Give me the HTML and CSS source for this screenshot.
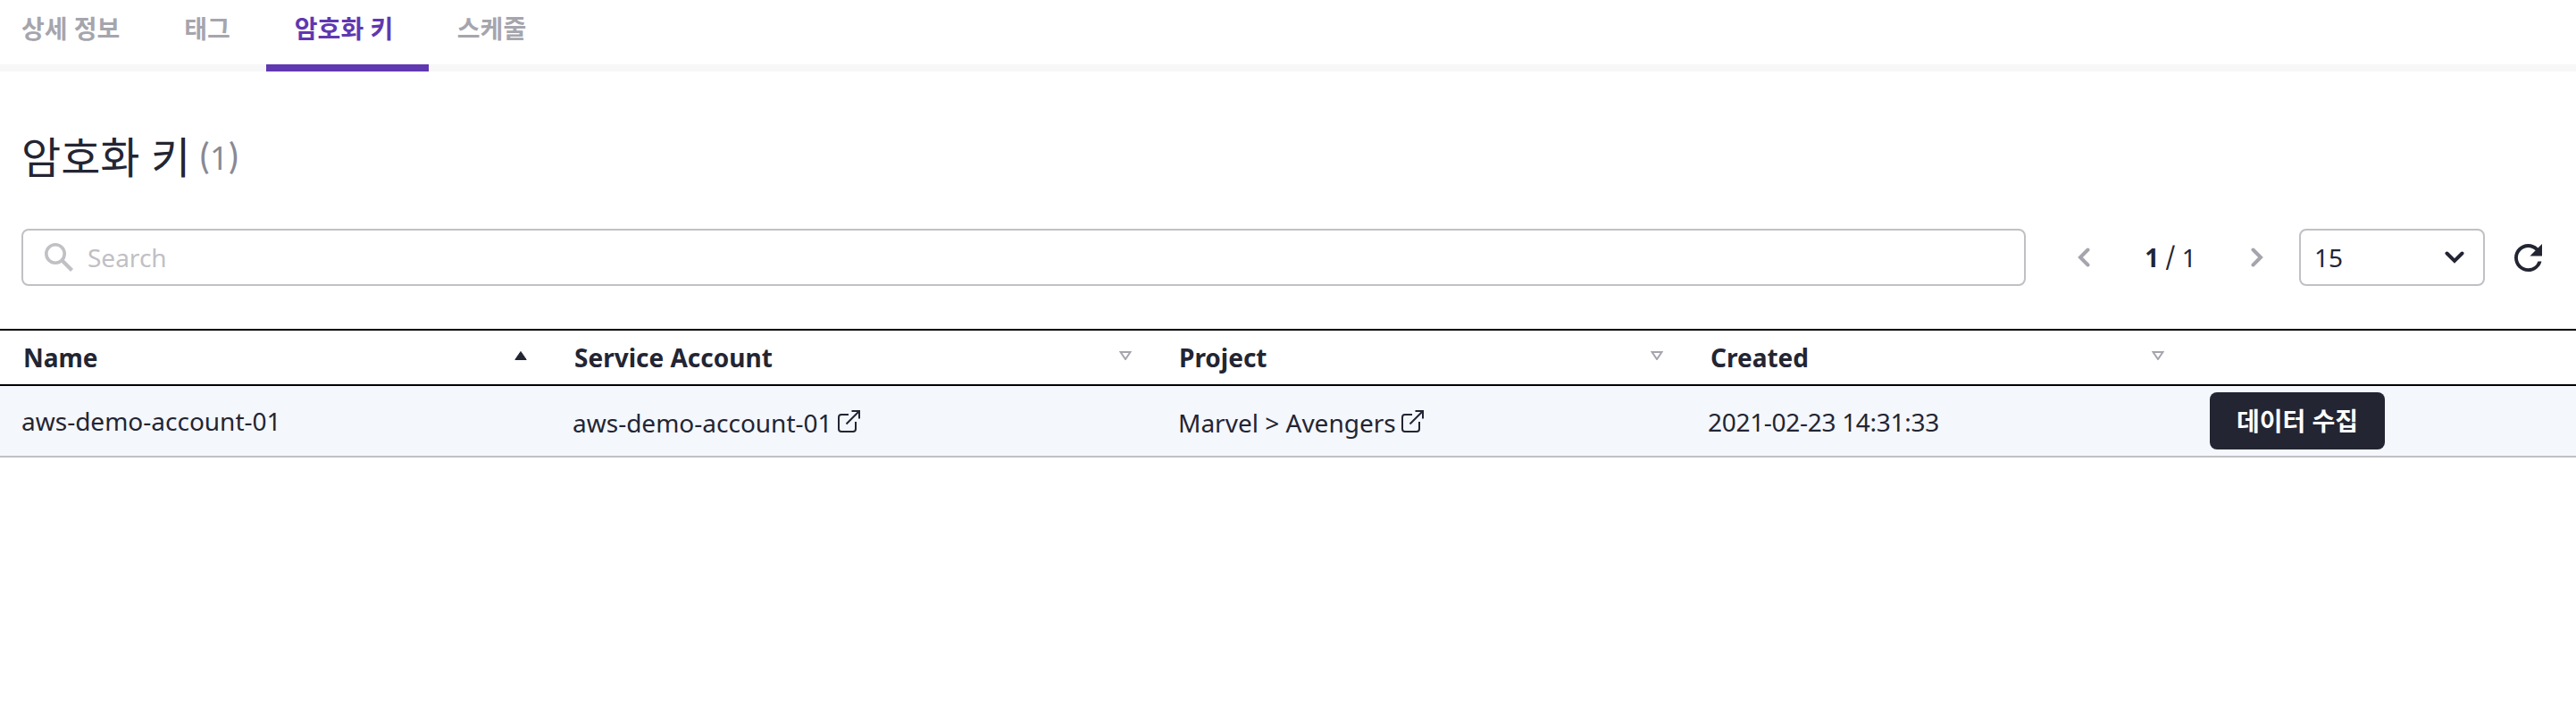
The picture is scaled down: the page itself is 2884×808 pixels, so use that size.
FILE: index.html
```html
<!DOCTYPE html>
<html lang="ko">
<head>
<meta charset="utf-8">
<title>암호화 키</title>
<link rel="stylesheet" href="styles.css">
</head>
<body>
<nav class="tabs">
  <a class="tab">상세 정보</a>
  <a class="tab">태그</a>
  <a class="tab tab-active">암호화 키</a>
  <a class="tab">스케줄</a>
</nav>
<main>
  <h1 class="title">암호화 키<span class="count"><span class="tall">(</span>1<span class="tall">)</span></span></h1>
  <div class="toolbar">
    <div class="search">
      <svg class="search-icon" width="32" height="32" viewBox="0 0 32 32"><circle cx="12" cy="12" r="10.2" fill="none" stroke="currentColor" stroke-width="3.6"/><path d="M19.5 19.5L30.5 30.5" stroke="currentColor" stroke-width="4.2"/></svg>
      <span>Search</span>
    </div>
    <div class="pager">
      <svg class="arrow" width="14" height="22" viewBox="0 0 14 22"><path d="M11.5 2.5L3 11L11.5 19.5"/></svg>
      <span class="pages"><b>1</b> <span class="tall">/</span> 1</span>
      <svg class="arrow" width="14" height="22" viewBox="0 0 14 22"><path d="M2.5 2.5L11 11L2.5 19.5"/></svg>
    </div>
    <div class="select">
      <span>15</span>
      <svg class="caret" width="22" height="14" viewBox="0 0 22 14"><path d="M2.5 2.5L11 11L19.5 2.5"/></svg>
    </div>
    <svg class="refresh" width="31" height="31" viewBox="4 4 16 16"><path fill="currentColor" d="M17.65 6.35A7.958 7.958 0 0 0 12 4c-4.42 0-7.99 3.58-7.99 8s3.57 8 7.99 8c3.73 0 6.84-2.55 7.73-6h-2.08A5.99 5.99 0 0 1 12 18c-3.31 0-6-2.69-6-6s2.69-6 6-6c1.66 0 3.14.69 4.22 1.78L13 11h7V4z"/></svg>
  </div>
  <div class="table">
    <div class="row head">
      <div class="cell">Name<svg class="sort sort-on" width="14" height="10" viewBox="0 0 14 10"><path d="M7 0.5L13.2 9.5H0.8Z"/></svg></div>
      <div class="cell">Service Account<svg class="sort" width="14" height="10" viewBox="0 0 14 10"><path d="M1.5 1H12.5L7 9Z"/></svg></div>
      <div class="cell">Project<svg class="sort" width="14" height="10" viewBox="0 0 14 10"><path d="M1.5 1H12.5L7 9Z"/></svg></div>
      <div class="cell">Created<svg class="sort" width="14" height="10" viewBox="0 0 14 10"><path d="M1.5 1H12.5L7 9Z"/></svg></div>
      <div class="cell"></div>
    </div>
    <div class="row body">
      <div class="cell">aws-demo-account-01</div>
      <div class="cell link">aws-demo-account-01<svg class="external" width="25" height="25" viewBox="0 0 25 25"><path d="M12 5H4Q1 5 1 8V21Q1 24 4 24H17Q20 24 20 21V13M9.5 15.5L24 1M15.5 1H24V9.5"/></svg></div>
      <div class="cell link">Marvel &gt; Avengers<svg class="external" width="25" height="25" viewBox="0 0 25 25"><path d="M12 5H4Q1 5 1 8V21Q1 24 4 24H17Q20 24 20 21V13M9.5 15.5L24 1M15.5 1H24V9.5"/></svg></div>
      <div class="cell date">2021-02-23 14:31:33</div>
      <div class="cell"><button class="collect">데이터 수집</button></div>
    </div>
  </div>
</main>
</body>
</html>
```
FILE: styles.css
```css
* { box-sizing: border-box; }
body {
  margin: 0;
  background: #fff;
  color: #232533;
  font: 28px/40px "Noto Sans", "Noto Sans CJK KR", sans-serif;
}
svg { display: block; flex: none; }
.tall { font-family: "Noto Sans CJK KR", sans-serif; font-weight: 500; line-height: 1; }
.tabs {
  display: flex;
  gap: 8px;
  height: 80px;
  padding-right: 24px;
  border-bottom: 8px solid #f7f7f7;
}
.tab {
  height: 80px;
  padding: 12px 32px 0;
  color: #a5a5ad;
  font-weight: 700;
}
.tab:first-child { padding-left: 24px; }
.tab-active {
  width: 182px;
  margin-right: -8px;
  color: #6038b0;
  border-bottom: 8px solid #6038b0;
}
.title {
  display: flex;
  align-items: flex-start;
  gap: 9px;
  margin: 0;
  padding: 61px 24px 0;
  height: 176px;
  font-size: 48px;
  font-weight: 400;
  line-height: 70px;
}
.count { color: #898995; font-size: 36px; line-height: 72px; }
.toolbar {
  display: flex;
  align-items: center;
  height: 64px;
  padding: 0 36px 0 24px;
}
.search, .select {
  display: flex;
  align-items: center;
  height: 64px;
  border: 2px solid #c0c0c5;
  border-radius: 8px;
}
.search {
  width: 2244px;
  gap: 16px;
  padding-left: 24px;
  color: #c0c0c5;
}
.pager {
  display: flex;
  align-items: center;
  justify-content: space-between;
  width: 208px;
  margin: 0 40px 0 58px;
}
.arrow, .caret { fill: none; stroke: currentColor; stroke-width: 4; stroke-linecap: round; }
.arrow { color: #a5a5ad; }
.select {
  justify-content: space-between;
  width: 208px;
  padding: 0 21px 0 15px;
}
.refresh { margin-left: 32.5px; }
.table { margin-top: 48px; }
.row {
  display: grid;
  grid-template-columns: 616px 678px 594px 562px 1fr;
}
.head {
  height: 64px;
  border: solid #000;
  border-width: 2px 0;
  font-weight: 700;
}
.body {
  height: 80px;
  background: #f4f7fc;
  border-bottom: 2px solid #c0c0c5;
}
.cell {
  display: flex;
  align-items: center;
  padding: 0 26px 0 24px;
}
.head .cell { padding: 0 27px; }
.head .cell:first-child { padding: 0 26px; }
.head .cell:nth-child(3) { padding: 0 26px; }
.sort {
  margin: 0 0 4px auto;
  fill: none;
  stroke: #a5a5ad;
  stroke-width: 2;
}
.sort-on { fill: #232533; stroke: #232533; stroke-width: 1; }
.link { padding-top: 3px; padding-left: 25px; }
.external {
  margin: 0 0 3px 6px;
  fill: none;
  stroke: currentColor;
  stroke-width: 2;
}
.date { padding-top: 2px; letter-spacing: -0.3px; }
.collect {
  width: 196px;
  height: 64px;
  padding: 0;
  border: 0;
  border-radius: 8px;
  background: #232533;
  color: #fff;
  font: inherit;
  font-weight: 700;
}
```
